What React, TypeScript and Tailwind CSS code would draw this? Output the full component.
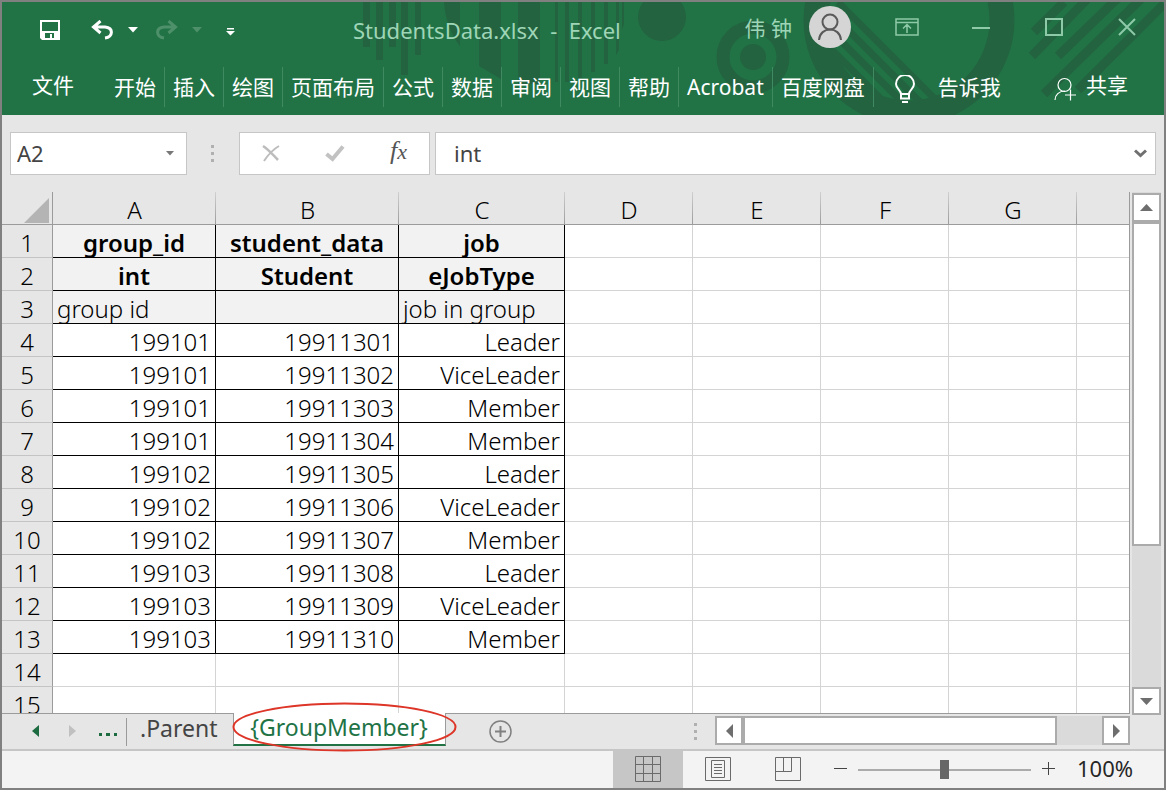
import React, { useState } from "react";

type Row = { cells: string[]; kind: "name" | "type" | "note" | "data" | "empty" };

const rows: Row[] = [
  { kind: "name", cells: ["group_id", "student_data", "job"] },
  { kind: "type", cells: ["int", "Student", "eJobType"] },
  { kind: "note", cells: ["group id", "", "job in group"] },
  { kind: "data", cells: ["199101", "19911301", "Leader"] },
  { kind: "data", cells: ["199101", "19911302", "ViceLeader"] },
  { kind: "data", cells: ["199101", "19911303", "Member"] },
  { kind: "data", cells: ["199101", "19911304", "Member"] },
  { kind: "data", cells: ["199102", "19911305", "Leader"] },
  { kind: "data", cells: ["199102", "19911306", "ViceLeader"] },
  { kind: "data", cells: ["199102", "19911307", "Member"] },
  { kind: "data", cells: ["199103", "19911308", "Leader"] },
  { kind: "data", cells: ["199103", "19911309", "ViceLeader"] },
  { kind: "data", cells: ["199103", "19911310", "Member"] },
  { kind: "empty", cells: ["", "", ""] },
  { kind: "empty", cells: ["", "", ""] },
];

const columns = ["A", "B", "C", "D", "E", "F", "G", ""];
const ribbonTabs = ["开始", "插入", "绘图", "页面布局", "公式", "数据", "审阅", "视图", "帮助", "Acrobat", "百度网盘"];

const kindClass: Record<Row["kind"], string> = {
  name: "bg-[#f2f2f2] text-center font-semibold border-black",
  type: "bg-[#f2f2f2] text-center font-semibold border-black",
  note: "bg-[#f2f2f2] text-left font-light border-black",
  data: "bg-white text-right font-light border-black",
  empty: "bg-white text-right font-light border-[#d4d4d4]",
};

function HeaderPattern() {
  return (
    <svg className="absolute top-0 right-0 h-[113px] w-[1162px]" viewBox="2 2 1162 113" aria-hidden="true">
      <g fill="#23633f">
        <path d="M363 2h7v45h-7zM376 2h7v58h-7zM389 2h7v45h-7zM401 2h7v73h-7zM415 2h6v53h-6z" />
        <path d="M444 2h16v44c-9-11-15-27-16-44z" />
        <path d="M479 2h22v77l-22-13zM518 2h22v82h-22z" />
        <path d="M555 2h3v80h-3zM565 2h4v80h-4zM578 2h4v76h-4zM591 2h4v70h-4zM604 2h4v62h-4zM616 2h3v48l-3 5zM622 2h2v22l-2 6z" />
        <circle cx="662" cy="17" r="24" />
        <circle cx="753" cy="57" r="13" />
      </g>
      <circle cx="753" cy="57" r="30" fill="none" stroke="#23633f" strokeWidth="13" />
      <circle cx="909" cy="20" r="93" fill="none" stroke="#23633f" strokeWidth="25" />
      <g stroke="#23633f" strokeWidth="7" fill="none">
        <path d="M838 2l99 99M826 8l94 94M822 22l80 80M832 50l48 48" />
      </g>
      <g stroke="#23633f" strokeWidth="9" fill="none">
        <path d="M1064 2l-30 30M1092 -6l-60 62M1122 -6l-64 62M1146 -6L1044 94M1164 4L1078 90" />
      </g>
    </svg>
  );
}

function TitleBar() {
  return (
    <div className="relative flex h-[56px] items-center text-[#9fd5b7]">
      <div className="flex w-[351px] shrink-0 items-center pl-[38px] text-white">
        <button aria-label="保存">
          <svg width="20" height="20" viewBox="0 0 20 20">
            <path fillRule="evenodd" fill="#fff" d="M0 0h20v20H2l-2-2zM2 2v9h16V2zM5 13v5h5v-4h2v4h2v-5z" />
          </svg>
        </button>
        <button aria-label="撤消" className="ml-[31px]">
          <svg width="22" height="20" viewBox="0 0 22 20" fill="none" stroke="#fff" strokeWidth="3">
            <path d="M9.500 1L2.500 7l7 6M3 7h11c9 1 8 10 0 11" />
          </svg>
        </button>
        <button aria-label="撤消选项" className="ml-[15px]">
          <svg width="10" height="6" viewBox="0 0 10 6"><path d="M0 0h10L5 5.500z" fill="#fff" /></svg>
        </button>
        <button aria-label="恢复" className="ml-[18px]">
          <svg width="22" height="20" viewBox="0 0 22 20" fill="none" stroke="#4d9069" strokeWidth="3">
            <path d="M12.500 1l7 6-7 6M19 7H8c-9 1-8 10 0 11" />
          </svg>
        </button>
        <button aria-label="恢复选项" className="ml-[14px]">
          <svg width="10" height="6" viewBox="0 0 10 6"><path d="M0 0h10L5 5.500z" fill="#4d9069" /></svg>
        </button>
        <button aria-label="自定义快速访问工具栏" className="mt-1 ml-[24px]">
          <svg width="10" height="8" viewBox="0 0 10 8"><path d="M1 0h7v1.500H1zM0 3h9L4.500 7.500z" fill="#fff" /></svg>
        </button>
      </div>
      <h1 className="whitespace-pre text-[22px] leading-[30px]">StudentsData.xlsx  -  Excel</h1>
      <div className="ml-auto flex items-center">
        <span className="pb-1 text-[21px] leading-[28px]">伟 钟</span>
        <button aria-label="账户" className="mr-[44px] mb-[6px] ml-[17px]">
          <svg width="42" height="42" viewBox="0 0 42 42" className="block">
            <circle cx="21" cy="21" r="21" fill="#d5d5d5" />
            <g fill="none" stroke="#5a5a5a" strokeWidth="2">
              <circle cx="21" cy="16" r="7.500" />
              <path d="M10 34c1-14 21-14 22 0" />
            </g>
          </svg>
        </button>
        <button aria-label="功能区显示选项" className="mb-[6px] shrink-0">
          <svg width="24" height="18" viewBox="0 0 24 18" fill="none" stroke="#8fcaa8" strokeWidth="1.500" className="block">
            <path d="M1 1h22v16H1zM1 4.500h22M12 15V7M8 10.500L12 6.500l4 4" />
          </svg>
        </button>
        <button aria-label="最小化" className="mb-[4px] ml-[53px] shrink-0">
          <svg width="18" height="2" viewBox="0 0 18 2" className="block"><path d="M0 0h18v2H0z" fill="#8fcaa8" /></svg>
        </button>
        <button aria-label="最大化" className="mb-[6px] ml-[55px] shrink-0">
          <svg width="18" height="18" viewBox="0 0 18 18" className="block"><path d="M1 1h16v16H1z" fill="none" stroke="#8fcaa8" strokeWidth="2" /></svg>
        </button>
        <button aria-label="关闭" className="mr-[28px] mb-[6px] ml-[55px] shrink-0">
          <svg width="18" height="18" viewBox="0 0 18 18" className="block"><path d="M1 1l16 16M17 1L1 17" stroke="#8fcaa8" strokeWidth="2" /></svg>
        </button>
      </div>
    </div>
  );
}

function Ribbon() {
  return (
    <nav className="relative flex h-[57px] items-center text-[21px] leading-[30px] whitespace-nowrap text-white">
      <button className="mr-[32px] mb-1 ml-[30px]">文件</button>
      {ribbonTabs.map((t) => (
        <button key={t} className="h-[40px] border-r border-[#3f8a60] px-2">
          {t}
        </button>
      ))}
      <button className="ml-[20px] flex items-center gap-[22px]">
        <svg width="22" height="28" viewBox="0 0 22 28" fill="none" stroke="#fff" strokeWidth="2" className="mt-1">
          <path d="M7 19c0-4-5-5-5-10a9 9 0 0 1 18 0c0 5-5 6-5 10zM7 19v4.500h8V19M8 27h6" />
        </svg>
        告诉我
      </button>
      <button className="mr-[36px] mb-1 ml-auto flex items-center gap-[10px]">
        <svg width="22" height="24" viewBox="0 0 22 24" fill="none" stroke="#fff" strokeWidth="1.200" className="mt-2">
          <circle cx="10.500" cy="8" r="6.500" />
          <path d="M1 23c0-5 4-9 10-9M16.500 12.500v11M11 18h11" />
        </svg>
        共享
      </button>
    </nav>
  );
}

function FormulaBar() {
  return (
    <div className="flex h-[77px] shrink-0 items-start px-2 pt-[17px] text-[22px] text-[#444]">
      <div className="flex h-[43px] w-[177px] items-center border border-[#c6c6c6] bg-white pr-[12px] pl-[6px]">
        <input aria-label="名称框" defaultValue="A2" className="min-w-0 flex-1 bg-transparent outline-none" />
        <button aria-label="名称列表">
          <svg width="8" height="5" viewBox="0 0 8 5"><path d="M0 0h8L4 4.500z" fill="#777" /></svg>
        </button>
      </div>
      <div className="mr-[25px] ml-[24px] flex h-[43px] flex-col justify-center gap-1">
        <i className="size-[3px] bg-[#b0b0b0]" />
        <i className="size-[3px] bg-[#b0b0b0]" />
        <i className="size-[3px] bg-[#b0b0b0]" />
      </div>
      <div className="flex h-[43px] w-[191px] shrink-0 items-center justify-between border border-[#c6c6c6] bg-white pr-[22px] pl-[22px]">
        <button aria-label="取消">
          <svg width="18" height="17" viewBox="0 0 18 17" stroke="#bdbdbd" fill="none"><path d="M1 1c6 4 10 9 15 14" strokeWidth="2.500" /><path d="M17 1C10 5 6 10 2 16" strokeWidth="2" /></svg>
        </button>
        <button aria-label="输入">
          <svg width="20" height="17" viewBox="0 0 20 17" stroke="#c2c2c2" strokeWidth="4" fill="none"><path d="M1.500 9l6 5L18 1.500" /></svg>
        </button>
        <button aria-label="插入函数" className="pb-1 font-['Liberation_Serif'] text-[26px] leading-[28px] text-[#555] italic">
          f<span className="text-[22px]">x</span>
        </button>
      </div>
      <div className="ml-[5px] flex h-[43px] min-w-0 flex-1 items-center border border-[#c6c6c6] bg-white pr-[8px] pl-[18px]">
        <input aria-label="编辑栏" defaultValue="int" className="min-w-0 flex-1 bg-transparent outline-none" />
        <button aria-label="展开编辑栏">
          <svg width="13" height="9" viewBox="0 0 13 9" fill="none" stroke="#707070" strokeWidth="3"><path d="M1 1.500l5.500 5 5.500-5" /></svg>
        </button>
      </div>
    </div>
  );
}

function Sheet() {
  return (
    <div className="min-w-0 flex-1 overflow-hidden border-r border-[#9b9b9b]">
      <table className="w-full table-fixed border-separate border-spacing-0 text-[24px] leading-[28px] text-black">
        <colgroup>
          <col className="w-[51px]" />
          <col className="w-[163px]" />
          <col className="w-[183px]" />
          <col className="w-[166px]" />
          <col className="w-[128px]" />
          <col className="w-[128px]" />
          <col className="w-[128px]" />
          <col className="w-[128px]" />
          <col />
        </colgroup>
        <thead>
          <tr className="h-[33px]">
            <th className="border-r border-b border-[#9b9b9b] bg-[#e6e6e6] p-0" aria-label="全选">
              <svg width="25" height="25" viewBox="0 0 25 25" className="mt-1 mr-[3px] ml-auto block"><path d="M25 0v25H0z" fill="#b4b4b4" /></svg>
            </th>
            {columns.map((c, i) => (
              <th
                key={i}
                className={
                  "border-b border-[#9b9b9b] bg-[#e6e6e6] p-0 pt-1 font-light " +
                  (c ? "bg-[linear-gradient(#d0d0d0,#9b9b9b)] bg-[length:1px_100%] bg-right bg-no-repeat" : "")
                }
              >
                {c}
              </th>
            ))}
          </tr>
        </thead>
        <tbody>
          {rows.map((r, i) => (
            <tr key={i} className="h-[33px]">
              <th className="border-r border-b border-[#9b9b9b] border-b-[#c4c4c4] bg-[#e6e6e6] p-0 pt-1 font-light">{i + 1}</th>
              {r.cells.map((c, j) => (
                <td key={j} className={"border-r border-b px-1 pt-1 pb-0 whitespace-nowrap " + kindClass[r.kind]}>
                  {c}
                </td>
              ))}
              {[0, 1, 2, 3].map((j) => (
                <td key={j} className="border-r border-b border-[#d4d4d4] bg-white p-0" />
              ))}
              <td className="border-b border-[#d4d4d4] bg-white p-0" />
            </tr>
          ))}
        </tbody>
      </table>
    </div>
  );
}

function VerticalScroll() {
  return (
    <div className="mr-[3px] -mb-[2px] ml-[2px] flex w-[29px] shrink-0 flex-col bg-[#dadada]">
      <button aria-label="向上滚动" className="mt-px flex h-[29px] shrink-0 items-center justify-center border-2 border-[#ababab] bg-white">
        <svg width="13" height="7" viewBox="0 0 13 7"><path d="M6.500 0L13 7H0z" fill="#6e6e6e" /></svg>
      </button>
      <div className="h-[324px] border-2 border-[#ababab] bg-white" />
      <button aria-label="向下滚动" className="mt-auto flex h-[28px] shrink-0 items-center justify-center border-2 border-[#ababab] bg-white">
        <svg width="13" height="7" viewBox="0 0 13 7"><path d="M0 0h13L6.500 7z" fill="#6e6e6e" /></svg>
      </button>
    </div>
  );
}

function SheetTabs() {
  return (
    <div className="flex h-[38px] shrink-0 items-start border-b-2 border-[#c6c6c6] text-[23px] text-[#444]">
      <div className="flex h-[36px] min-w-0 flex-1 items-start border-t border-[#9b9b9b]">
        <button aria-label="上一个工作表" className="mt-[11px] ml-[30px]">
          <svg width="7" height="12" viewBox="0 0 7 12" className="block"><path d="M7 0v12L0 6z" fill="#1d6b40" /></svg>
        </button>
        <button aria-label="下一个工作表" className="mt-[11px] ml-[30px]">
          <svg width="7" height="12" viewBox="0 0 7 12" className="block"><path d="M0 0v12l7-6z" fill="#c0c0c0" /></svg>
        </button>
        <button aria-label="更多工作表" className="mt-[19px] mr-[9px] ml-[23px]">
          <svg width="18" height="3" viewBox="0 0 18 3" className="block"><path d="M0 0h3v3H0zM7 0h4v3H7zM15 0h3v3h-3z" fill="#1d6b40" /></svg>
        </button>
        <button className="mt-1 flex h-[28px] items-start border-l border-[#9b9b9b] pr-[15px] pl-[13px] leading-[20px]">.Parent</button>
        <div className="relative -mt-px">
          <button className="block h-[33px] w-[213px] border-r border-b-2 border-l border-[#9b9b9b] border-b-[#217346] bg-white pb-[4px] leading-[26px] text-[#217346]">
            {"{GroupMember}"}
          </button>
          <svg className="absolute -top-[11px] -left-[1px] h-[50px] w-[225px]" viewBox="0 0 225 50" aria-hidden="true">
            <ellipse cx="112.500" cy="25" rx="111" ry="23.500" fill="none" stroke="#dd3527" strokeWidth="2" />
          </svg>
        </div>
        <button aria-label="新工作表" className="mt-[6px] ml-[43px]">
          <svg width="23" height="23" viewBox="0 0 23 23" fill="none" stroke="#808080" className="block">
            <circle cx="11.500" cy="11.500" r="10.500" strokeWidth="1.500" />
            <path d="M11.500 6v11M6 11.500h11" strokeWidth="2" />
          </svg>
        </button>
        <div className="mt-[9px] mr-[18px] ml-auto flex flex-col gap-1">
          <i className="size-[3px] bg-[#b0b0b0]" />
          <i className="size-[3px] bg-[#b0b0b0]" />
          <i className="size-[3px] bg-[#b0b0b0]" />
        </div>
      </div>
      <div className="mr-[34px] flex h-[36px] w-[415px] items-start border-t border-[#9b9b9b]">
        <div className="mt-[2px] flex h-[29px] flex-1 bg-[#dadada]">
          <button aria-label="向左滚动" className="flex w-[28px] items-center justify-center border-2 border-[#ababab] bg-white">
            <svg width="7" height="14" viewBox="0 0 7 14"><path d="M7 0v14L0 7z" fill="#6e6e6e" /></svg>
          </button>
          <div className="w-[314px] border-2 border-[#ababab] bg-white" />
          <button aria-label="向右滚动" className="ml-auto flex w-[28px] items-center justify-center border-2 border-[#ababab] bg-white">
            <svg width="7" height="14" viewBox="0 0 7 14"><path d="M0 0v14l7-7z" fill="#6e6e6e" /></svg>
          </button>
        </div>
      </div>
    </div>
  );
}

function StatusBar() {
  const [zoom, setZoom] = useState(100);
  return (
    <div className="flex h-[37px] shrink-0 items-center justify-end bg-[#f3f3f3] text-[#444]">
      <button aria-label="普通" className="flex h-full w-[70px] items-center justify-center bg-[#c6c6c6] pb-[2px]">
        <svg width="26" height="26" viewBox="0 0 26 26" fill="none" stroke="#6a6a6a"><path d="M.5.5h25v25H.5zM8.500.5v25M17.500.5v25M.5 8.500h25M.5 17.500h25" /></svg>
      </button>
      <button aria-label="页面布局" className="flex h-full w-[70px] items-center justify-center pb-[2px]">
        <svg width="26" height="24" viewBox="0 0 26 24" fill="none" stroke="#6a6a6a"><path d="M.5.5h25v23H.5zM6.500 3.500h13v17h-13zM9 7.500h8M9 10.500h8M9 13.500h8M9 16.500h8" /></svg>
      </button>
      <button aria-label="分页预览" className="flex h-full w-[70px] items-center justify-center pb-[2px]">
        <svg width="26" height="24" viewBox="0 0 26 24" fill="none" stroke="#6a6a6a"><path d="M.5.5h25v23H.5zM8.500.5v14M16.500.5v14H.5" /></svg>
      </button>
      <button aria-label="缩小" className="ml-[11px] pb-[2px]" onClick={() => setZoom(Math.max(10, zoom - 10))}>
        <svg width="13" height="13" viewBox="0 0 13 13" className="block"><path d="M0 6.500h13" stroke="#444" /></svg>
      </button>
      <input
        type="range"
        aria-label="显示比例"
        min={10}
        max={190}
        value={zoom}
        onChange={(e) => setZoom(Number(e.target.value))}
        className="mx-[11px] h-[20px] w-[173px] appearance-none bg-[linear-gradient(#ababab,#ababab)] bg-[length:100%_2px] bg-center bg-no-repeat [&::-webkit-slider-thumb]:h-[19px] [&::-webkit-slider-thumb]:w-[9px] [&::-webkit-slider-thumb]:appearance-none [&::-webkit-slider-thumb]:bg-[#666]"
      />
      <button aria-label="放大" className="pb-[2px]" onClick={() => setZoom(Math.min(190, zoom + 10))}>
        <svg width="13" height="13" viewBox="0 0 13 13" className="block"><path d="M0 6.500h13M6.500 0v13" stroke="#444" /></svg>
      </button>
      <output className="ml-[22px] w-[87px] pb-[2px] text-[22px] text-[#262626]">{zoom}%</output>
    </div>
  );
}

export default function App() {
  return (
    <div className="flex h-screen flex-col overflow-hidden border-2 border-[#808080] bg-[#e6e6e6] font-['Noto_Sans','Noto_Sans_CJK_SC',sans-serif]">
      <header className="relative shrink-0 overflow-hidden bg-[#217346]">
        <HeaderPattern />
        <TitleBar />
        <Ribbon />
      </header>
      <FormulaBar />
      <main className="flex min-h-0 flex-1">
        <Sheet />
        <VerticalScroll />
      </main>
      <SheetTabs />
      <StatusBar />
    </div>
  );
}
